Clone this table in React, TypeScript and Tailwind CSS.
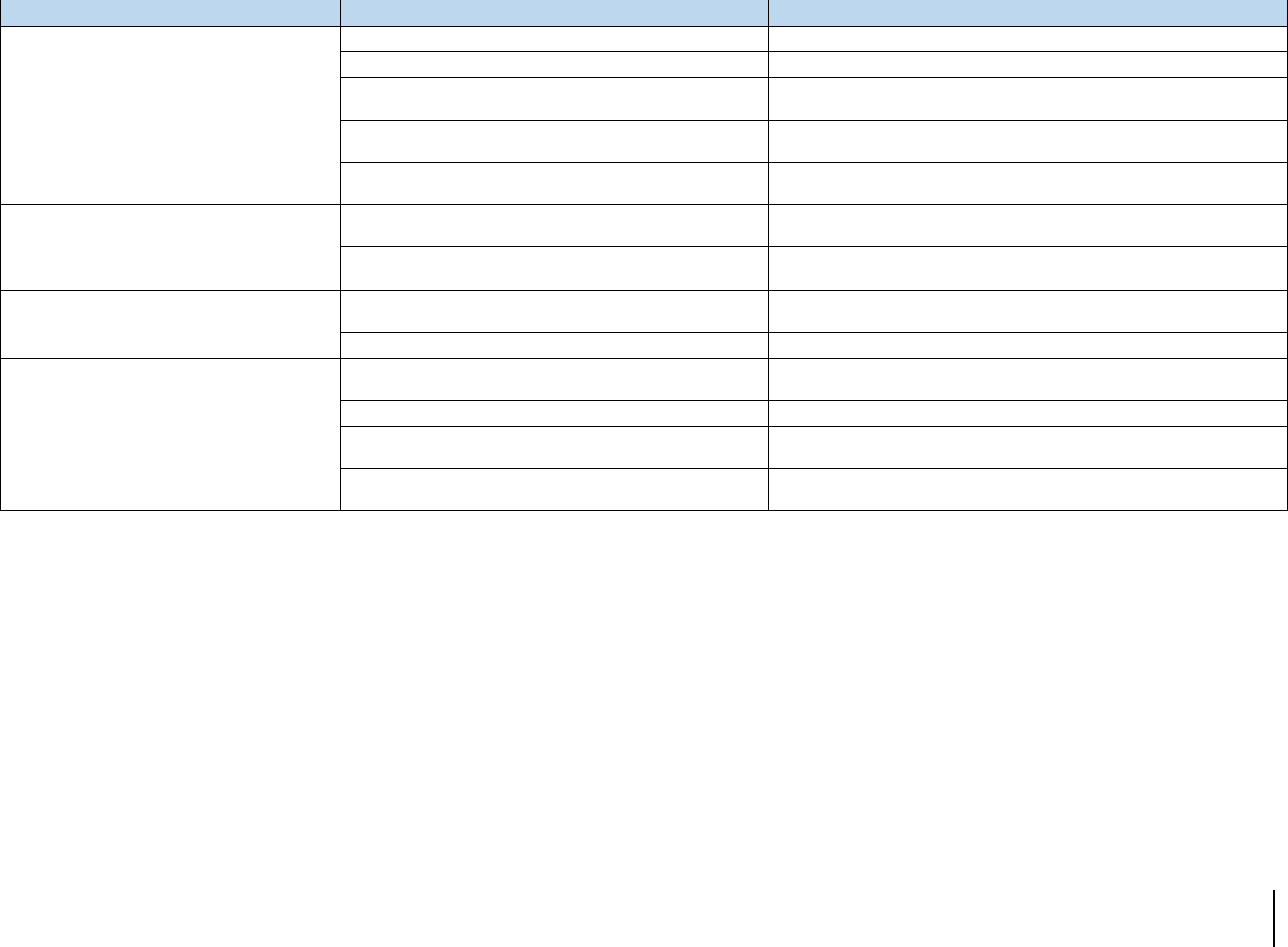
import React from 'react';

type Group = { rows: number[] };

// row heights per group, measured off the grid lines
const groups: Group[] = [
    { rows: [25, 26, 43, 42, 42] },
    { rows: [42, 44] },
    { rows: [42, 26] },
    { rows: [42, 26, 42, 42] },
];

const cell = 'border border-black p-0';

const App = () => {
    return (
        <div className="h-[947px] w-[1288px] bg-white flex flex-col font-['Liberation_Sans',sans-serif] overflow-hidden">
            <table className="border-collapse table-fixed w-[1287px]">
                <colgroup>
                    <col className="w-[340px]" />
                    <col className="w-[428px]" />
                    <col className="w-[519px]" />
                </colgroup>
                <thead>
                    {/* top edge is cut off in the shot, so no top rule */}
                    <tr className="h-[26px] bg-[#bdd7ee]">
                        <th className={`${cell} border-t-0`}></th>
                        <th className={`${cell} border-t-0`}></th>
                        <th className={`${cell} border-t-0`}></th>
                    </tr>
                </thead>
                <tbody>
                    {groups.map((g, gi) =>
                        g.rows.map((h, ri) => (
                            <tr key={`${gi}-${ri}`} style={{ height: h }}>
                                {ri === 0 && <td rowSpan={g.rows.length} className={cell}></td>}
                                <td className={cell}></td>
                                <td className={cell}></td>
                            </tr>
                        ))
                    )}
                </tbody>
            </table>

            {/* page edge marker */}
            <div className="mt-auto ml-[1273px] w-[2px] h-[57px] bg-black" />
        </div>
    );
};

export default App;
